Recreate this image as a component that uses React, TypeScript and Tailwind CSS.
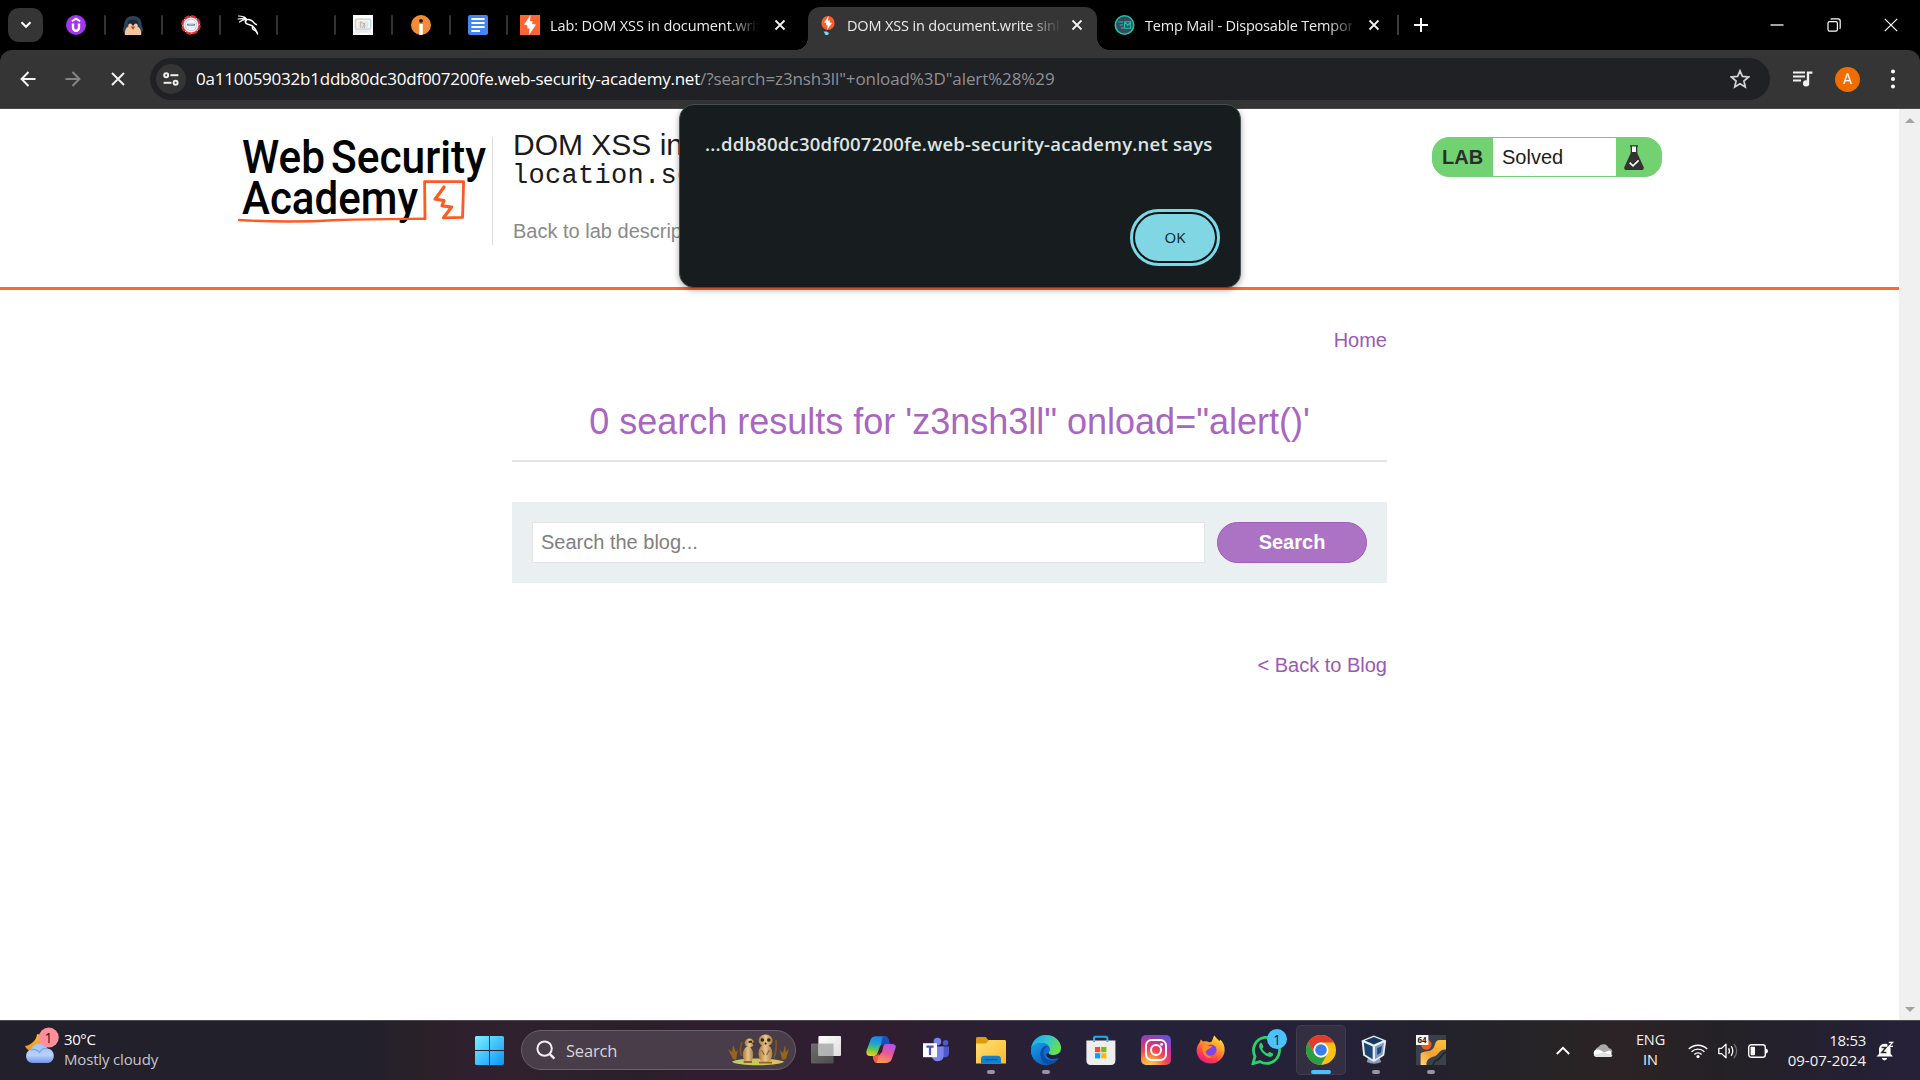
import React from "react";

const SEGOE = "font-['Open_Sans','Noto_Sans',sans-serif]";
const ARIAL = "font-['Liberation_Sans',Arial,sans-serif]";

/* ---------- shared marks ---------- */

function BurpBolt({ className }: { className?: string }) {
  return (
    <svg viewBox="0 0 20 20" preserveAspectRatio="none" className={className}>
      <rect width="20" height="20" fill="#ff6633" />
      <path d="M10.5 0 L10 6.2 L12.6 6.2 L12.2 9 L16 9.6 L9 20 L9.6 13.4 L7.2 13.2 L7.6 10.4 L4 9.4 Z" fill="#fff" />
    </svg>
  );
}

function CloseX() {
  return (
    <svg viewBox="0 0 12 12" className="h-3 w-3 shrink-0">
      <path d="M1.5 1.5 L10.5 10.5 M10.5 1.5 L1.5 10.5" stroke="#f1f1f1" strokeWidth="1.8" />
    </svg>
  );
}

/* ---------- pinned tab favicons ---------- */

function UdemyIcon() {
  return (
    <svg viewBox="0 0 20 20" className="h-5 w-5">
      <circle cx="10" cy="10" r="10" fill="#a435f0" />
      <path d="M5.8 6.2 L10 3.6 L14.2 6.2" fill="none" stroke="#fff" strokeWidth="1.9" />
      <path d="M7 8.4 V12.8 A3 3 0 0 0 13 12.8 V8.4" fill="none" stroke="#fff" strokeWidth="2.4" />
    </svg>
  );
}
function MonkIcon() {
  return (
    <svg viewBox="0 0 20 20" className="h-5 w-5">
      <path d="M3 19.6 C-0.6 17 -0.4 13 1.2 11 C1 4 5 1 10 1 C15 1 19 4 18.8 11 C20.4 13 20.6 17 17 19.6 Z" fill="#2c4258" />
      <path d="M4.5 10 C4.5 5 7 4.8 10 4.8 C13 4.8 15.5 5 15.5 10 Z" fill="#1b2735" />
      <path d="M1.8 20 C1.6 14 3.8 10.4 10 10.4 C16.2 10.4 18.4 14 18.2 20 Z" fill="#f3c79b" />
      <circle cx="7.2" cy="10.4" r="1.9" fill="#f3c79b" />
      <circle cx="12.8" cy="10.4" r="1.9" fill="#f3c79b" />
      <path d="M7.6 11.6 H12.4 L10 14.8 Z" fill="#d8342c" />
    </svg>
  );
}
function BadgeIcon() {
  return (
    <svg viewBox="0 0 20 20" className="h-5 w-5">
      <circle cx="10" cy="10" r="8.8" fill="#fff" stroke="#d9262c" strokeWidth="2.2" strokeDasharray="5.2 1.7" />
      <circle cx="10" cy="10" r="7.8" fill="#f4f7fb" stroke="#d9262c" strokeWidth="0.7" />
      <circle cx="10" cy="10" r="5.8" fill="#eef2f8" stroke="#b4c4da" strokeWidth="0.8" />
      <rect x="6" y="8.8" width="8" height="1.8" fill="#5a7bb0" />
      <rect x="7.4" y="9.4" width="5.2" height="0.6" fill="#c9d6e8" />
    </svg>
  );
}
function KaliIcon() {
  return (
    <svg viewBox="0 0 22 20" className="h-5 w-[22px]" fill="none" stroke="#fff" strokeLinecap="round" strokeLinejoin="round">
      <path d="M1.5 1 C5 1.2 8 2 9.6 4.4" strokeWidth="1.1" />
      <path d="M1 4 C4 3.4 7 3.4 9.6 4.4 C7 4.4 4 5.6 2.4 7.2" strokeWidth="1.1" />
      <path d="M7 2.2 C9.5 3.4 10 5 8.4 6.6 C8 8.4 10.4 9.2 13.5 10 C17 10.8 17.6 13 20 17.6" strokeWidth="1.6" />
      <path d="M10 4.6 C13 4 15.6 6 17.4 8.4 L19.4 9.6" strokeWidth="1.4" />
      <path d="M15.4 11.4 C14.8 13.8 16.6 15 18.2 15.6 C19.6 16.4 20 17.6 20.6 19.2" strokeWidth="1.2" />
    </svg>
  );
}
function PictureIcon() {
  return (
    <svg viewBox="0 0 20 20" className="h-5 w-5">
      <rect width="20" height="20" fill="#fdfdfd" />
      <rect x="2.2" y="4.2" width="15.6" height="10" rx="1.6" fill="#f2f6fb" stroke="#b5d2ea" strokeWidth="1.2" />
      <path d="M3 14 V6 Q3 4.2 5 4.2 H10" fill="none" stroke="#f0d4a6" strokeWidth="1.2" />
      <rect x="5" y="6.2" width="10" height="7" fill="#e3e6ea" />
      <path d="M7.6 7 V13 M7.6 7 L11.4 9 L9.4 13 M11.6 8 V13.4" stroke="#c4b6a7" strokeWidth="1" fill="none" />
      <rect x="2" y="15.2" width="16" height="2.6" fill="#ece9f1" />
    </svg>
  );
}
function InfoIcon() {
  return (
    <svg viewBox="0 0 20 20" className="h-5 w-5">
      <circle cx="10" cy="10" r="10" fill="#f48c36" />
      <circle cx="10" cy="5.8" r="1.9" fill="#1d1d1f" />
      <path d="M8.2 9 H11.8 V19.8 H8.2 Z" fill="#fff" />
    </svg>
  );
}
function DocsIcon() {
  return (
    <svg viewBox="0 0 20 20" className="h-5 w-5">
      <rect width="20" height="20" rx="2" fill="#4285f4" />
      <path d="M3.4 4 H16.6 M3.4 8 H16.6 M3.4 12 H16.6 M3.4 16 H12" stroke="#fff" strokeWidth="1.8" />
    </svg>
  );
}
function TempMailIcon() {
  return (
    <svg viewBox="0 0 21 20" className="h-5 w-[21px] shrink-0">
      <circle cx="10.5" cy="10" r="9.2" fill="#3d4561" stroke="#17c9a4" strokeWidth="1.6" />
      <path d="M4.4 7 H9 M5.6 10 H9 M7 13 H10 M10.6 6.8 H16.4 V13.2 H10.6 Z M10.6 6.8 L13.8 10.4 L16.4 7.4" fill="none" stroke="#17c9a4" strokeWidth="1.1" />
    </svg>
  );
}

const pinned: (() => React.ReactElement)[] = [
  UdemyIcon, MonkIcon, BadgeIcon, KaliIcon, () => <span />, PictureIcon, InfoIcon, DocsIcon,
];

function TabStrip() {
  return (
    <div className={`flex h-[50px] bg-black text-[#ececec] ${SEGOE} text-[14.5px]`}>
      <div className="ml-2 mt-2 flex h-[34px] w-[35px] shrink-0 items-center justify-center rounded-[11px] bg-[#353535]">
        <svg viewBox="0 0 12 8" className="h-2 w-3">
          <path d="M1.5 1.3 L6 5.8 L10.5 1.3" fill="none" stroke="#fff" strokeWidth="2" />
        </svg>
      </div>
      <div className="ml-[5px] flex">
        {pinned.map((Icon, i) => (
          <div key={i} className="flex h-[50px] w-[57.5px] items-center">
            <div className="flex w-[55.5px] shrink-0 justify-center"><Icon /></div>
            <div className="h-5 w-[2px] shrink-0 rounded-full bg-[#333]" />
          </div>
        ))}
      </div>
      <div className="ml-[12px] flex h-[50px] w-[287px] items-center">
        <BurpBolt className="h-5 w-5 shrink-0" />
        <div className="ml-[10px] mt-px w-[211px] overflow-hidden whitespace-nowrap tracking-[-0.1px] [mask-image:linear-gradient(90deg,#000_85%,transparent_99%)]">
          Lab: DOM XSS in document.write sink
        </div>
        <div className="ml-[13px]"><CloseX /></div>
      </div>
      <div className="relative ml-px mt-[7px] flex h-[43px] w-[289px] items-center rounded-t-[12px] bg-[#353535] pb-[7px]">
        <div className="absolute -left-3 bottom-0 h-3 w-3 bg-[radial-gradient(circle_at_0_0,#000_11.5px,#353535_12px)]" />
        <div className="absolute -right-3 bottom-0 h-3 w-3 bg-[radial-gradient(circle_at_100%_0,#000_11.5px,#353535_12px)]" />
        <svg viewBox="0 0 14 20" className="ml-[13px] mt-[2px] h-5 w-[14px] shrink-0">
          <defs><clipPath id="burp-dot"><ellipse cx="7" cy="7" rx="6.6" ry="7" /></clipPath></defs>
          <g clipPath="url(#burp-dot)">
            <rect width="14" height="14" fill="#ff5c2b" />
            <path d="M7.6 0 L7 4.4 L9 4.6 L8.6 6.4 L11 7 L6 14 L6.6 9.2 L5 9 L5.4 7 L3 6.4 Z" fill="#fff" />
          </g>
          <path d="M2.6 15.4 H5.6 L8 17 L7 19 H4.6" fill="#7adbe8" />
        </svg>
        <div className="ml-[12px] mt-px w-[212px] overflow-hidden whitespace-nowrap tracking-[-0.15px] [mask-image:linear-gradient(90deg,#000_85%,transparent_101%)]">
          DOM XSS in document.write sink
        </div>
        <div className="ml-[12px]"><CloseX /></div>
      </div>
      <div className="ml-[17px] flex h-[50px] w-[285px] items-center">
        <TempMailIcon />
        <div className="ml-[10px] mt-px w-[210px] overflow-hidden whitespace-nowrap tracking-[-0.2px] [mask-image:linear-gradient(90deg,#000_88%,transparent_103%)]">
          Temp Mail - Disposable Temporary
        </div>
        <div className="ml-[16px]"><CloseX /></div>
        <div className="ml-[17px] h-5 w-[2px] bg-[#3c3c3c]" />
      </div>
      <div className="ml-[15px] flex h-[50px] items-center">
        <svg viewBox="0 0 14 14" className="h-[14px] w-[14px]"><path d="M7 0 V14 M0 7 H14" stroke="#fff" strokeWidth="2" /></svg>
      </div>
      <div className="ml-auto mr-[22px] flex h-[50px] items-center gap-[43px]">
        <svg viewBox="0 0 14 14" className="h-[14px] w-[14px]"><path d="M0.5 7 H13.5" stroke="#fff" strokeWidth="1.3" /></svg>
        <svg viewBox="0 0 14 14" className="h-[14px] w-[14px]" fill="none" stroke="#fff" strokeWidth="1.2">
          <rect x="1" y="3.6" width="9.4" height="9.6" rx="1.6" />
          <path d="M3.6 1.4 Q4 0.9 5 0.9 H11 Q13.2 0.9 13.2 3 V9.2 Q13.2 10.3 12.6 10.8" />
        </svg>
        <svg viewBox="0 0 14 14" className="h-[14px] w-[14px]"><path d="M0.8 0.8 L13.2 13.2 M13.2 0.8 L0.8 13.2" stroke="#fff" strokeWidth="1.2" /></svg>
      </div>
    </div>
  );
}

function Toolbar() {
  return (
    <div className="h-[59px] bg-black">
      <div className="flex h-[59px] items-center rounded-t-[12px] border-b border-[#4b4a4a] bg-[#353535]">
        <div className="ml-[19.5px] flex items-center gap-[29.5px]">
          <svg viewBox="0 0 16 16" className="h-4 w-4" fill="none" stroke="#f3f3f3" strokeWidth="2"><path d="M15.5 8 H2 M8.5 1 L1.6 8 L8.5 15" /></svg>
          <svg viewBox="0 0 16 16" className="h-4 w-4" fill="none" stroke="#858585" strokeWidth="2"><path d="M0.5 8 H14 M7.5 1 L14.4 8 L7.5 15" /></svg>
          <svg viewBox="0 0 14 14" className="h-[14px] w-[14px]" fill="none" stroke="#f3f3f3" strokeWidth="1.9"><path d="M1 1 L13 13 M13 1 L1 13" /></svg>
        </div>
        <div className={`ml-[25.5px] flex h-[42px] w-[1620px] items-center rounded-full bg-[#202124] ${SEGOE} text-[17px] whitespace-nowrap`}>
          <div className="ml-[6px] flex h-[30px] w-[30px] items-center justify-center rounded-full bg-[#353535]">
            <svg viewBox="0 0 16 14" className="h-[14px] w-4" fill="none" stroke="#eee" strokeWidth="2">
              <circle cx="3.2" cy="3.2" r="2" /><path d="M7.4 3.2 H15.4" />
              <circle cx="12.6" cy="10.8" r="2" /><path d="M0.6 10.8 H8.4" />
            </svg>
          </div>
          <div className="ml-[10px]">
            <span className="tracking-[-0.235px] text-white">0a110059032b1ddb80dc30df007200fe.web-security-academy.net</span>
            <span className="tracking-[-0.1px] text-[#8f9094]">/?search=z3nsh3ll"+onload%3D"alert%28%29</span>
          </div>
          <svg viewBox="0 0 20 20" className="ml-auto mr-5 h-5 w-5">
            <path d="M10 1.8 L12.4 7.4 L18.6 8 L13.9 12 L15.3 18 L10 14.8 L4.7 18 L6.1 12 L1.4 8 L7.6 7.4 Z" fill="none" stroke="#d4d4d4" strokeWidth="1.7" />
          </svg>
        </div>
        <svg viewBox="0 0 20 16" className="ml-[23px] h-4 w-5" fill="#f1f1f1">
          <path d="M0 0.5 H12 V2.5 H0 Z M0 4.5 H12 V6.5 H0 Z M0 8.5 H8 V10.5 H0 Z" />
          <path d="M13.8 0.5 H19.4 V2.8 H16.2 V12.2 A3.1 3.1 0 1 1 13.8 9.4 Z" />
        </svg>
        <div className="ml-[22px] flex h-[25px] w-[25px] items-center justify-center rounded-full bg-[#ef6c00] font-['Roboto',sans-serif] text-[14px] leading-none text-white">A</div>
        <svg viewBox="0 0 4 20" className="ml-[31px] h-5 w-1" fill="#fff"><circle cx="2" cy="2.6" r="2" /><circle cx="2" cy="10" r="2" /><circle cx="2" cy="17.4" r="2" /></svg>
      </div>
    </div>
  );
}

/* ---------- page ---------- */

function AcademyLogo() {
  return (
    <svg viewBox="0 0 252 92" className="h-[92px] w-[252px]">
      <g fontFamily="Roboto, sans-serif" fontWeight="500" fontSize="47" fill="#000">
        <text x="4" y="38" textLength="83" lengthAdjust="spacingAndGlyphs">Web</text>
        <text x="93" y="38" textLength="155" lengthAdjust="spacingAndGlyphs">Security</text>
        <text x="4" y="79" textLength="176" lengthAdjust="spacingAndGlyphs">Academy</text>
      </g>
      <g fill="none" stroke="#ff5a1f" strokeLinejoin="round" strokeLinecap="round">
        <path d="M1 85 C30 86.8 70 86.8 100 85 C130 84 158 84 187 83.8" strokeWidth="2.4" />
        <path d="M187 83.8 L186.6 46.6 H225.6 L224.6 82.4 L205.6 82.8" strokeWidth="2.8" />
        <path d="M206 52 C202 58 199 61.4 197 64 L206 65.6 L204 70.8 L213.6 72 L205.6 82.6" strokeWidth="3.2" />
      </g>
    </svg>
  );
}

function LabBadge() {
  return (
    <div className={`flex h-10 w-[230px] items-stretch overflow-hidden rounded-[17px] border border-[#72d272] bg-[#72d272] ${ARIAL} text-[20px] text-[#1c1c1c]`}>
      <div className="flex w-[60px] items-center pl-[9px] font-bold text-[#2d2d2d]">LAB</div>
      <div className="flex w-[123px] items-center bg-white pl-[9px]">Solved</div>
      <svg viewBox="0 0 20 26" className="ml-2 mt-[7px] h-[26px] w-5">
        <path d="M7.4 1.4 V8 M12.6 1.4 V8 M6 1 H14" stroke="#333" strokeWidth="1.4" />
        <rect x="8" y="1.6" width="4" height="5.6" fill="#fff" />
        <path d="M7.2 7 H12.8 L19.8 22.6 Q20 25 18.4 25 H1.6 Q0 25 0.2 22.6 Z" fill="#333" />
        <path d="M5.6 17.6 L9 20.8 L14.6 15.4" fill="none" stroke="#fff" strokeWidth="1.6" />
      </svg>
    </div>
  );
}

function PageHeader() {
  return (
    <header className="flex h-[181px] border-b-[3px] border-[#ff6633] pl-[238px]">
      <div className="mt-[26px]"><AcademyLogo /></div>
      <div className="ml-[2px] mt-[28px] h-[108px] w-px bg-[#dcdcdc]" />
      <div className={`ml-5 mt-5 w-[500px] ${ARIAL} whitespace-nowrap`}>
        <h2 className="text-[30px] leading-[32px] text-[#1a1a1a]">DOM XSS in document.write</h2>
        <p className="-ml-px h-[31px] font-['Liberation_Mono',monospace] text-[27px] leading-[31px] tracking-[0.3px] text-[#1a1a1a]">location.search</p>
        <p className="mt-[27px] text-[20px] leading-6 text-[#8a8a8a]">Back to lab description</p>
      </div>
      <div className="mt-7 ml-[419px]"><LabBadge /></div>
    </header>
  );
}

function Page() {
  return (
    <main className="flex h-[911px] bg-white">
      <div className="min-w-0 flex-1">
        <PageHeader />
        <section className={`ml-[512px] w-[875px] ${ARIAL} text-[20px] text-[#9b59b6]`}>
          <p className="mt-[38px] text-right leading-6">Home</p>
          <h1 className="mt-[50px] text-center text-[36px] leading-[40px] text-[#a866c0]">0 search results for 'z3nsh3ll" onload="alert()'</h1>
          <div className="mt-[18px] h-[2px] bg-[#e4e4e4]" />
          <div className="mt-[40px] flex h-[81px] items-center bg-[#eaf0f2] pl-5">
            <div className="flex h-[41px] w-[673px] items-center border border-[#e2e4e5] bg-white pb-[2px] pl-2 text-[#808080]">Search the blog...</div>
            <div className="ml-3 flex h-[41px] w-[150px] items-center justify-center rounded-full border border-[#9f5cba] bg-[#ac72c3] pb-[2px] font-bold text-white">Search</div>
          </div>
          <p className="mt-[70px] text-right leading-6">&lt; Back to Blog</p>
        </section>
      </div>
      <div className="flex w-[21px] flex-col items-center justify-between bg-[#f0f0f0] pt-[9px] pb-2">
        <div className="h-0 w-0 border-x-[5px] border-b-[5px] border-x-transparent border-b-[#a3a3a3]" />
        <div className="h-0 w-0 border-x-[5px] border-t-[5px] border-x-transparent border-t-[#a3a3a3]" />
      </div>
    </main>
  );
}

function AlertDialog() {
  return (
    <div className={`absolute top-[104px] left-[679px] flex h-[184px] w-[562px] flex-col rounded-[15px] border border-[#455052] bg-[#171d1e] text-[#dee3e4] shadow-[0_2px_6px_rgba(0,0,0,0.35)] ${SEGOE}`}>
      <p className="mt-[27px] ml-[25px] text-[18.5px] leading-6 font-semibold tracking-[0.23px] whitespace-nowrap">
        ...ddb80dc30df007200fe.web-security-academy.net says
      </p>
      <div className="mt-[53px] mr-5 flex h-[57px] w-[90px] items-center justify-center self-end rounded-full border-[3px] border-[#79d9e8] bg-[#0c1112]">
        <div className="flex h-[47px] w-[80px] items-center justify-center rounded-full bg-[#80d6e3] text-[15px] text-[#04252b]">OK</div>
      </div>
    </div>
  );
}

/* ---------- taskbar ---------- */

const box = "h-[30px] w-[30px]";

function WeatherIcon() {
  return (
    <svg viewBox="0 0 34 38" className="h-[38px] w-[34px]">
      <defs>
        <linearGradient id="cloud" x1="0" y1="0" x2="0" y2="1"><stop offset="0" stopColor="#9cc4f8" /><stop offset="0.6" stopColor="#b9d0fb" /><stop offset="1" stopColor="#6d95ea" /></linearGradient>
        <linearGradient id="moon" x1="0" y1="0" x2="0" y2="1"><stop offset="0" stopColor="#fbc02d" /><stop offset="1" stopColor="#f28a1c" /></linearGradient>
      </defs>
      <path d="M12 7 C12 12 7 18 0 19 C2 23 6 25 9 25 L20 20 L16 8 Z" fill="url(#moon)" />
      <path d="M7 36 A7 7 0 0 1 6 22.4 A9 9 0 0 1 22.6 21.6 A7.4 7.4 0 0 1 23.4 36 Z" fill="url(#cloud)" />
      <path d="M6 23 Q11 21 14 25 M14 26 Q17 20.6 22.6 21.6" stroke="#6fa2ee" strokeWidth="1.2" fill="none" />
      <circle cx="23.8" cy="10.5" r="10" fill="#ff8f9b" />
    </svg>
  );
}
function StartIcon() {
  return (
    <svg viewBox="0 0 29 29" className="h-[29px] w-[29px]">
      <defs><linearGradient id="win" x1="0" y1="0" x2="1" y2="1"><stop offset="0" stopColor="#7af0ff" /><stop offset="1" stopColor="#0a95ff" /></linearGradient></defs>
      <path d="M1 0 H14 V14 H0 V1 Z M15 0 H28 L29 1 V14 H15 Z M0 15 H14 V29 H1 L0 28 Z M15 15 H29 V28 L28 29 H15 Z" fill="url(#win)" />
    </svg>
  );
}
function Meerkats() {
  return (
    <svg viewBox="0 0 62 32" className="h-8 w-[62px]">
      <defs>
        <linearGradient id="fur" x1="0" y1="0" x2="1" y2="0"><stop offset="0" stopColor="#a8793f" /><stop offset="0.5" stopColor="#e6c48c" /><stop offset="1" stopColor="#a97c45" /></linearGradient>
        <linearGradient id="sand" x1="0" y1="0" x2="1" y2="0"><stop offset="0" stopColor="#b9cf62" /><stop offset="1" stopColor="#e2c04f" /></linearGradient>
      </defs>
      <path d="M5 27.6 C12 23.4 46 23.4 57 27.6 C54 32.6 8 32.6 5 27.6 Z" fill="url(#sand)" />
      <path d="M6 25 L1 15 L5 18 L6 11 L9 18 L11 15 L9 26 Z M55 26 L53 16 L56 19 L58 11 L59 18 L62 15 L59 25 Z" fill="#97641c" />
      <path d="M15 8 Q12 16 14.6 22 M49 6 Q50 16 47 24" stroke="#7d5426" strokeWidth="1.8" fill="none" />
      <ellipse cx="21" cy="20.6" rx="5.2" ry="8" fill="url(#fur)" />
      <ellipse cx="22.4" cy="9" rx="4.8" ry="4.4" fill="url(#fur)" />
      <path d="M21.6 7.8 H25" stroke="#3a2412" strokeWidth="2" />
      <circle cx="26.4" cy="9.4" r="1" fill="#2b190c" />
      <ellipse cx="38.4" cy="19.6" rx="7" ry="9.4" fill="url(#fur)" />
      <ellipse cx="38.6" cy="6.4" rx="7" ry="5.8" fill="url(#fur)" />
      <circle cx="35.4" cy="6" r="1.8" fill="#3a2412" /><circle cx="41.8" cy="6" r="1.8" fill="#3a2412" />
      <circle cx="38.6" cy="9.4" r="1" fill="#2b190c" />
      <path d="M34.6 16 L37.4 21 M42.4 16 L39.6 21" stroke="#8b6432" strokeWidth="1.2" />
      <path d="M16.6 28 H25 M32 28.6 H45" stroke="#8d6430" strokeWidth="1.8" />
    </svg>
  );
}
function TaskViewIcon() {
  return (
    <svg viewBox="0 0 30 30" className={box}>
      <defs>
        <linearGradient id="tvb" x1="0" y1="0" x2="1" y2="1"><stop offset="0" stopColor="#6f6f6f" /><stop offset="1" stopColor="#4c4c4c" /></linearGradient>
        <linearGradient id="tvf" x1="0" y1="0" x2="1" y2="1"><stop offset="0" stopColor="#fff" /><stop offset="1" stopColor="#dedede" /></linearGradient>
      </defs>
      <rect x="0" y="8.6" width="22.6" height="19.8" rx="1" fill="url(#tvb)" />
      <rect x="7.4" y="1" width="22.6" height="20" rx="1" fill="url(#tvf)" />
      <path d="M7.4 8.6 H22.6 V21 H7.4 Z" fill="#a9a9a9" fillOpacity="0.85" />
    </svg>
  );
}
function CopilotIcon() {
  return (
    <svg viewBox="0 0 30 30" className={box}>
      <defs>
        <linearGradient id="cpa" x1="0.4" y1="0" x2="0.2" y2="1"><stop offset="0" stopColor="#1488e8" /><stop offset="0.35" stopColor="#1fa0d8" /><stop offset="0.65" stopColor="#5fc45a" /><stop offset="1" stopColor="#fbd20a" /></linearGradient>
        <linearGradient id="cpb" x1="0.8" y1="0" x2="0.4" y2="1"><stop offset="0" stopColor="#a955f5" /><stop offset="0.45" stopColor="#e6559a" /><stop offset="1" stopColor="#ff9a4a" /></linearGradient>
      </defs>
      <path d="M10 1.2 H18.6 Q21.6 1.2 22.4 4.6 L23.6 9 H17.6 Q15 9 14 11.6 L11.4 18.2 Q10.4 21 7.4 21 H4 Q-0.6 20.6 0.6 15.6 L4.6 4.6 Q6 1.2 10 1.2 Z" fill="url(#cpa)" />
      <path d="M17 1.2 H18.6 Q21.6 1.2 22.4 4.6 L23.6 9 H17.6 Q15.6 9 14.4 11.2 Z" fill="#164fc4" />
      <path d="M20 28 H11.6 Q8.6 28 7.8 25 L6.8 21 H9 Q12.6 20.6 13.8 16.6 L16.2 11.4 Q17.4 9 20 9 H26 Q31 9.2 29.4 13.6 L25.6 24.6 Q24 28 20 28 Z" fill="url(#cpb)" />
      <path d="M6.8 21 H9 Q11.8 20.8 13 18.2 L11.4 25.4 Q11 27.6 9.4 27.2 Q8.2 26.6 7.8 25 Z" fill="#f25a3c" />
      <path d="M14.2 13 L17.8 9 L16 17 L12.4 21 Z" fill="#302031" />
    </svg>
  );
}
function TeamsIcon() {
  return (
    <svg viewBox="0 0 30 30" className={box}>
      <circle cx="16.4" cy="6.6" r="3.8" fill="#7b83eb" />
      <circle cx="24.6" cy="7.8" r="2.8" fill="#5059c9" />
      <path d="M20 11.4 H28 V18 Q28 22.4 23.6 22.4 Q20 22.4 20 18.4 Z" fill="#5059c9" />
      <path d="M10 11.4 H22.6 V20 Q22.6 26.2 16.6 26.2 Q11.4 26.2 10.6 20.4 Z" fill="#7b83eb" />
      <rect x="2" y="8.2" width="14" height="14" fill="#fff" />
      <path d="M5.4 11.6 H12.6 M9 11.6 V20" stroke="#4b53bc" strokeWidth="2.2" />
    </svg>
  );
}
function ExplorerIcon() {
  return (
    <svg viewBox="0 0 30 30" className={box}>
      <defs><linearGradient id="fold" x1="0" y1="0" x2="1" y2="1"><stop offset="0" stopColor="#ffe07a" /><stop offset="1" stopColor="#fbb92a" /></linearGradient></defs>
      <path d="M0 3.4 Q0 2 1.4 2 H9.6 L12.4 5 H29 V10 H0 Z" fill="#dd9a0c" />
      <path d="M0 8.4 H10 L13 5 H28.6 Q30 5 30 6.4 V28.6 H0 Z" fill="url(#fold)" />
      <path d="M5 28.6 V24.2 Q5 20.8 8.4 20.8 H21.6 Q25 20.8 25 24.2 V28.6 Z" fill="#1381d0" />
      <path d="M8.6 24.6 H21.4" stroke="#0b5597" strokeWidth="1.2" />
    </svg>
  );
}
function EdgeIcon() {
  return (
    <svg viewBox="0 0 30 30" className={box}>
      <defs>
        <linearGradient id="eg" x1="0" y1="0" x2="1" y2="0.5"><stop offset="0" stopColor="#1d9ee8" /><stop offset="0.5" stopColor="#2fc4d4" /><stop offset="1" stopColor="#69e04c" /></linearGradient>
        <linearGradient id="ed" x1="0" y1="0" x2="0.6" y2="1"><stop offset="0" stopColor="#1aa2e4" /><stop offset="1" stopColor="#0b5fc6" /></linearGradient>
      </defs>
      <circle cx="15" cy="15" r="15" fill="#0f6fd0" />
      <path d="M0 14 C1 4.6 8 0 15 0 C24 0 30 6.4 30 12.6 C30 17.6 26.4 20 22.4 20 C18.6 20 17 18.6 17.8 17.4 C18.8 16.4 19 15.4 19 14.6 C19 11 15.4 8 10.8 8 C5.4 8 1 11 0 14 Z" fill="url(#eg)" />
      <path d="M0 14.6 C1.6 10.6 6 8 10.8 8 C13.6 8 16 9 17.4 10.6 C12.6 10.2 9.4 14.4 9.4 18.4 C9.4 24 13 28.4 17.6 29.8 C8 31.6 -0.6 24.6 0 14.6 Z" fill="url(#ed)" />
      <path d="M17.4 10.8 C12.8 12 10.4 19.6 15 23.6 C19 27 24.6 25.4 27.6 23 L25 26.8 C22 29 18.6 29.8 17.4 29.8 C12 28.4 9.2 23.6 9.4 18.4 C9.6 13.4 13.6 10.2 17.4 10.8 Z" fill="#0a4fa6" />
      <path d="M17.6 17.6 C17 19 19 20.4 23 20.2 C26 20 28.6 18.6 29.4 17 L32 20 L27.6 23 C22.6 25.2 16.4 24 15 19.4 Z" fill="#252039" />
    </svg>
  );
}
function StoreIcon() {
  return (
    <svg viewBox="0 0 30 30" className={box}>
      <path d="M8 7 V3.4 Q8 1.8 9.4 1.8 H20 Q21.4 1.8 21.4 3.4 V7" fill="none" stroke="#1eaee8" strokeWidth="2" />
      <path d="M0.4 5.4 H29.4 V25.6 Q29.4 30 25 30 H4.8 Q0.4 30 0.4 25.6 Z" fill="#eeeeef" />
      <path d="M8 5.4 V7 M21.4 5.4 V7" stroke="#1eaee8" strokeWidth="2" />
      <rect x="9" y="12" width="5.2" height="5.2" fill="#f25022" /><rect x="15.2" y="12" width="5.2" height="5.2" fill="#7fba00" />
      <rect x="9" y="18.2" width="5.2" height="5.2" fill="#00a4ef" /><rect x="15.2" y="18.2" width="5.2" height="5.2" fill="#ffb900" />
    </svg>
  );
}
function InstagramIcon() {
  return (
    <svg viewBox="0 0 30 30" className={box}>
      <defs>
        <radialGradient id="ig" cx="0.28" cy="1.05" r="1.1"><stop offset="0" stopColor="#fed655" /><stop offset="0.25" stopColor="#fda046" /><stop offset="0.5" stopColor="#f4494e" /><stop offset="0.75" stopColor="#cc2f93" /><stop offset="1" stopColor="#6b50d0" /></radialGradient>
      </defs>
      <rect width="30" height="30" rx="5" fill="url(#ig)" />
      <rect x="5" y="5" width="20" height="20" rx="5.6" fill="none" stroke="#fff" strokeWidth="2" />
      <circle cx="15" cy="15" r="5" fill="none" stroke="#fff" strokeWidth="2" />
      <circle cx="20.6" cy="9.4" r="1.4" fill="#fff" />
    </svg>
  );
}
function FirefoxIcon() {
  return (
    <svg viewBox="0 0 30 30" className={box}>
      <defs><linearGradient id="ff" x1="0.85" y1="0" x2="0.3" y2="1"><stop offset="0" stopColor="#fff04a" /><stop offset="0.4" stopColor="#ff9a28" /><stop offset="0.75" stopColor="#ff3f4c" /><stop offset="1" stopColor="#e5198a" /></linearGradient></defs>
      <path d="M18.2 0.4 C19.6 2 21.6 4 23.2 6 L24.6 4.8 C27.6 8 29 11.6 28.6 16 C28 23.4 21.6 28.6 14.6 28.6 C6.6 28.6 0.6 22.6 0.6 15.6 C0.6 11.6 2.2 9 3.6 7.4 L4.8 4.4 L7 6.6 C9.2 5.8 11.6 6.4 12.6 7 C13.6 7.4 15.6 8 16.6 4.6 C17 3 17.6 1.4 18.2 0.4 Z" fill="url(#ff)" />
      <circle cx="15" cy="15" r="5.6" fill="#7a48e8" />
      <path d="M6.6 9.6 C9.2 8.6 11.6 9.6 13.2 11 H16.6 L13.6 13.6 C11.6 14.6 10.6 15.8 9.6 16.6 C10 20.6 13.6 22.4 16.6 21.6 C11.6 25.6 4.6 20 6.6 9.6 Z" fill="#ff8a2a" />
    </svg>
  );
}
function WhatsAppIcon() {
  return (
    <svg viewBox="0 0 30 30" className={box}>
      <path d="M2 28.6 L4 21.4 A13 13 0 1 1 9 26.6 Z" fill="none" stroke="#25d366" strokeWidth="2.8" />
      <path d="M9.6 8 C8 9 7.8 11.4 8.8 13.4 C10.6 17.6 14 20.6 18 21.8 C20 22.4 22 21 22.2 19.2 Q22.2 18.6 21.4 18.2 L18.8 17 Q18.2 16.8 17.8 17.4 L16.8 18.6 C14 17.6 12.4 16 11.2 13.6 L12.2 12.2 Q12.6 11.8 12.2 11.2 L11 8.4 Q10.6 7.6 9.6 8 Z" fill="#25d366" />
    </svg>
  );
}
function ChromeIcon() {
  return (
    <svg viewBox="0 0 30 30" className={box}>
      <circle cx="15" cy="15" r="15" fill="#fbc116" />
      <path d="M2 7.5 A15 15 0 0 1 28 7.5 H15 A7.5 7.5 0 0 0 8.5 18.75 Z" fill="#e33b2e" />
      <path d="M2 7.5 L8.5 18.75 A7.5 7.5 0 0 0 21.5 18.75 L15 30 A15 15 0 0 1 2 7.5 Z" fill="#2a9d47" />
      <circle cx="15" cy="15" r="7.5" fill="#fff" />
      <circle cx="15" cy="15" r="5.8" fill="#3b7ded" />
    </svg>
  );
}
function VirtualBoxIcon() {
  return (
    <svg viewBox="1.8 0 30 30" className={box}>
      <path d="M9 22 H20 L22 27 Q15 30.6 7.6 27 Z" fill="#8d9bb8" />
      <path d="M14.6 0.4 L27 5.4 L25 20.6 L14.6 27 L4 20.6 L2.4 5.4 Z" fill="#e6edf6" />
      <path d="M14.6 2 L23.6 5.6 L14.6 9.6 L5.6 5.6 Z" fill="#17385e" />
      <path d="M4.6 7.6 L13.4 11.6 V24.2 L5.8 19.4 Z" fill="#1c456f" />
      <path d="M24.8 7.6 L15.8 11.6 V24.2 L23.4 19.4 Z" fill="#7b9bc4" />
      <path d="M18 13.2 L22.6 11 L21.8 17.6 L18 20 Z" fill="#234a76" />
    </svg>
  );
}
function EngineIcon() {
  return (
    <svg viewBox="0 0 30 30" className={box}>
      <defs><linearGradient id="gold" x1="1" y1="0" x2="0" y2="1"><stop offset="0" stopColor="#ffc23e" /><stop offset="0.6" stopColor="#f5a030" /><stop offset="1" stopColor="#ffd77a" /></linearGradient></defs>
      <rect width="30" height="30" fill="#3b414b" />
      <circle cx="10.4" cy="9.6" r="5.2" fill="#ec5b1c" />
      <path d="M30 5 H23 C18 6 19.6 12 16 14.6 C12 17.6 7 15.6 4.6 19 V30 H10.6 C9.6 26 13 23 17 21.8 C23 20.6 23 13.6 30 14.6 Z" fill="url(#gold)" />
      <path d="M30 17 C25 18 26 24 21 25 C18 26 17.4 28 17 30" fill="none" stroke="#20242a" strokeWidth="1.6" />
      <rect width="12.4" height="10" fill="#f6f6f6" />
    </svg>
  );
}

type App = { icon: () => React.ReactElement; run?: boolean; active?: boolean; badge?: string; mark?: string };
const apps: App[] = [
  { icon: TaskViewIcon }, { icon: CopilotIcon }, { icon: TeamsIcon },
  { icon: ExplorerIcon, run: true }, { icon: EdgeIcon, run: true }, { icon: StoreIcon },
  { icon: InstagramIcon }, { icon: FirefoxIcon }, { icon: WhatsAppIcon, badge: "1" },
  { icon: ChromeIcon, active: true }, { icon: VirtualBoxIcon, run: true }, { icon: EngineIcon, run: true, mark: "64" },
];

function Tray() {
  return (
    <div className="ml-auto flex h-[59px] items-center text-[14.5px] leading-5 text-[#f2f2f2]">
      <svg viewBox="0 0 14 9" className="h-[9px] w-[14px]"><path d="M0.8 8 L7 1.8 L13.2 8" fill="none" stroke="#fff" strokeWidth="1.9" /></svg>
      <svg viewBox="0 0 20 13" className="ml-[23px] h-[13px] w-5">
        <path d="M3 8 A4 4 0 0 1 5.4 3 A5.6 5.6 0 0 1 15.6 4 A4.6 4.6 0 0 1 19.4 8 L10 12 Z" fill="#a9a9a9" />
        <path d="M4 13 A3.8 3.8 0 0 1 3.4 5.6 Q6 5 8 6.6 L11 8.4 L16 6.6 A3.4 3.4 0 0 1 16.8 13 Z" fill="#fff" />
        <path d="M0.6 11 L11 8.2 L19.6 11.4 Q19 13 16.8 13 H4 Q1.4 13 0.6 11 Z" fill="#e2e2e2" />
      </svg>
      <div className="-mt-px ml-[22px] w-[31px] text-center tracking-[-0.1px]"><p>ENG</p><p>IN</p></div>
      <svg viewBox="0 0 20 16" className="ml-[22px] h-4 w-5" fill="none" stroke="#fff" strokeWidth="1.4">
        <path d="M0.8 6 A13 13 0 0 1 19.2 6 M3.6 8.8 A9 9 0 0 1 16.4 8.8 M6.4 11.4 A5.2 5.2 0 0 1 13.6 11.4" />
        <circle cx="10" cy="13.6" r="1.6" fill="#fff" stroke="none" />
      </svg>
      <svg viewBox="0 0 20 18" className="ml-[10px] h-[18px] w-5" fill="none" stroke="#fff" strokeWidth="1.3">
        <path d="M0.8 6.4 H3.6 L8 2.2 V15.8 L3.6 11.6 H0.8 Z" strokeLinejoin="round" />
        <path d="M10.6 6.4 Q12.4 9 10.6 11.6 M13.2 4.2 Q16.4 9 13.2 13.8" />
        <path d="M16 2 Q21.4 9 16 16" stroke="#6d6a70" />
      </svg>
      <svg viewBox="0 0 20 14" className="ml-[10px] h-[14px] w-5">
        <rect x="0.7" y="0.7" width="16.6" height="12.6" rx="2.6" fill="none" stroke="#fff" strokeWidth="1.4" />
        <rect x="2.6" y="2.8" width="4.4" height="8.4" rx="0.8" fill="#fff" /><path d="M18 4.4 Q20 5 20 7 Q20 9 18 9.6 Z" fill="#fff" />
      </svg>
      <div className="-mt-[2px] ml-[18px] w-[80px] text-right text-[15px]"><p className="tracking-[-0.3px]">18:53</p><p className="whitespace-nowrap">09-07-2024</p></div>
      <svg viewBox="0 0 18 20" className="mr-[26px] ml-[10px] h-5 w-[18px]">
        <path d="M3 13 V7.4 A6 6 0 0 1 14.6 7 V12.8 L17 15.6 H0.4 Z" fill="#fff" />
        <path d="M5.8 17 H11.2 Q10.6 19.4 8.5 19.4 Q6.4 19.4 5.8 17 Z" fill="#fff" />
        <path d="M5.6 6.4 H10 L5.8 11.4 H10.4" fill="none" stroke="#2a2229" strokeWidth="1.5" />
        <path d="M11.4 0 H18 V6 H11.4 Z" fill="#28223a" />
        <path d="M12.8 1.4 H16.6 L13 5.4 H17" fill="none" stroke="#fff" strokeWidth="1.3" />
      </svg>
    </div>
  );
}

function Taskbar() {
  return (
    <footer className={`flex h-[60px] items-start border-t border-[#4a4a50] bg-[linear-gradient(90deg,#21202b_0,#21202b_360px,#2a2128_420px,#30202f_480px,#2d222c_580px,#2b2029_640px,#301e30_700px,#2e1e30_900px,#2a2035_1010px,#252138_1100px,#252138_1340px,#23212b_1440px,#262426_1540px,#2c2325_1620px,#242126_1720px,#242033_1860px,#262139_1920px)] ${SEGOE}`}>
      <div className="flex w-[475px]">
        <div className="relative mt-[6px] ml-[25px]">
          <WeatherIcon />
          <span className="absolute top-[1px] left-[19.5px] text-[14px] leading-5 text-[#2b1518]">1</span>
        </div>
        <div className="mt-[8px] ml-[5px] text-[15px] leading-5">
          <p className="tracking-[-0.4px] text-white">30°C</p>
          <p className="tracking-[-0.16px] text-[#c8c6cb]">Mostly cloudy</p>
        </div>
      </div>
      <div className="mt-[15px]"><StartIcon /></div>
      <div className="mt-[9px] ml-[17px] flex h-10 w-[275px] items-center rounded-full border border-[#6a606b] bg-[#483d49] pl-[14px]">
        <svg viewBox="0 0 20 20" className="h-5 w-5" fill="none" stroke="#f1eef2"><circle cx="8.6" cy="8.6" r="7.2" strokeWidth="2" /><path d="M13.6 13.8 L18.4 18.6" strokeWidth="2.4" /></svg>
        <span className="ml-[10px] flex-1 pt-[2px] text-[16.5px] tracking-[-0.2px] text-[#d9d5da]">Search</span>
        <div className="mr-[6px]"><Meerkats /></div>
      </div>
      <div className="ml-[5px] flex gap-[5px]">
        {apps.map((a, i) => {
          const Icon = a.icon;
          return (
            <div key={i} className={`relative mt-1 flex h-[50px] w-[50px] flex-col items-center rounded-[5px] pt-[10px] ${a.active ? "bg-[#332e42] outline outline-1 -outline-offset-1 outline-[#403b4e]" : ""}`}>
              <Icon />
              {a.run && <span className="mt-[5px] h-1 w-2 rounded-full bg-[#97949f]" />}
              {a.active && <span className="mt-[5px] h-1 w-5 rounded-full bg-[#4cc2ff]" />}
              {a.badge && <span className="absolute top-[4px] left-[26px] flex h-5 w-5 items-center justify-center rounded-full bg-[#4cc2ff] text-[14px] text-[#0c2432]">{a.badge}</span>}
              {a.mark && <span className="absolute top-[10px] left-[11.5px] text-[8px] leading-[10px] font-bold text-[#222]">{a.mark}</span>}
            </div>
          );
        })}
      </div>
      <Tray />
    </footer>
  );
}

export default function App() {
  return (
    <div className="relative flex h-[1080px] w-[1920px] flex-col overflow-hidden bg-white">
      <TabStrip />
      <Toolbar />
      <Page />
      <Taskbar />
      <AlertDialog />
    </div>
  );
}
